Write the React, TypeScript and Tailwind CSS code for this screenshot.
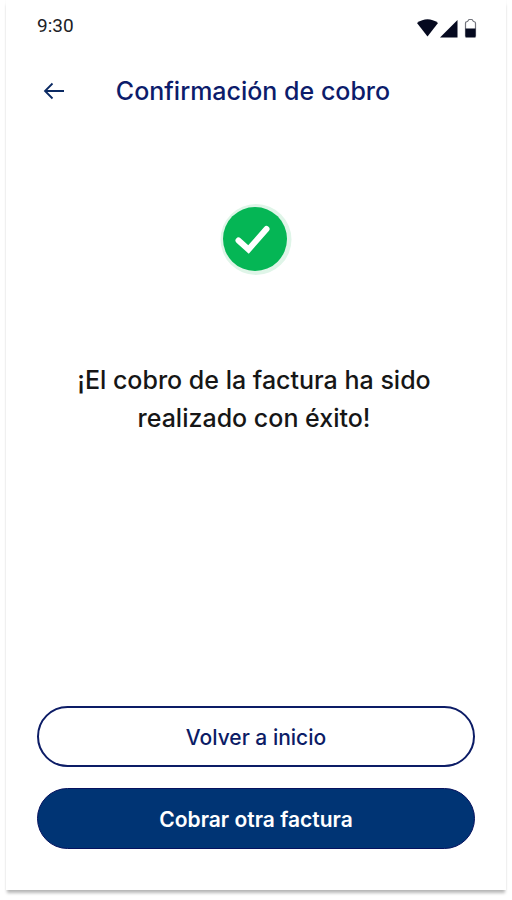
import React from "react";

function StatusIcons() {
  return (
    <svg className="h-6 w-15 overflow-visible" viewBox="0 0 60 24" aria-hidden="true">
      <path d="M2 9Q12.500 1.500 23 9L12.500 22.500Z" fill="#05091f" />
      <path d="M42.500 6V23.500H25Z" fill="#05091f" />
      <path
        d="M50.500 22V9.500Q50.500 7.500 52.500 7.500L54 5.500H57L58.500 7.500Q60.500 7.500 60.500 9.500V22Z"
        fill="#ffffff"
        stroke="#73757d"
        strokeWidth="1.200"
      />
      <path d="M50.500 14.500H60.500V23.500H50.500Z" fill="#05091f" />
    </svg>
  );
}

function StatusBar() {
  return (
    <div className="flex h-6 items-center justify-between text-[#202124]">
      <time className="font-[Roboto,sans-serif] text-[19px] leading-6">9:30</time>
      <StatusIcons />
    </div>
  );
}

function SuccessMark() {
  return (
    <svg
      className="mx-auto block h-18 w-18"
      viewBox="0 0 72 72"
      role="img"
      aria-label="Cobro exitoso"
    >
      <circle cx="36" cy="35.500" r="35.500" fill="#dff5e8" />
      <circle cx="35" cy="35" r="32" fill="#05b655" />
      <path
        d="M18.500 36.500L28.500 45.500L46.500 25"
        fill="none"
        stroke="#ffffff"
        strokeWidth="6"
        strokeLinecap="round"
        strokeLinejoin="miter"
      />
    </svg>
  );
}

export default function App() {
  return (
    <div className="flex min-h-screen flex-col bg-white px-1.5 pb-2.5 font-['Inter','Liberation_Sans',sans-serif]">
      <main className="flex grow flex-col bg-white px-[31px] pt-3.5 pb-[41px] shadow-[0_0_2px_rgba(0,0,0,0.04),0_4px_3px_-1px_rgba(0,0,0,0.28)]">
        <StatusBar />
        <header className="mt-8 grid grid-cols-[34px_1fr_40px] items-center">
          <button type="button" aria-label="Volver" className="flex h-10 items-center justify-center text-[#0b2a63]">
            <svg className="h-6 w-6" viewBox="0 0 24 24" fill="none" stroke="currentColor" strokeWidth="1.800" aria-hidden="true">
              <path d="M22 13H3M10.500 5.500L3 13L10.500 20.500" />
            </svg>
          </button>
          <h1 className="pt-0.5 text-center text-[25px] leading-[38px] font-medium text-[#0c1c6b]">
            Confirmación de cobro
          </h1>
        </header>
        <section className="mt-[94px] flex flex-col items-center gap-[85px] text-center">
          <SuccessMark />
          <p className="max-w-[384px] pr-1 text-[25px] leading-[38px] font-medium text-[#161616]">
            ¡El cobro de la factura ha sido realizado con éxito!
          </p>
        </section>
        <div className="mt-auto flex flex-col gap-[21px]">
          <button
            type="button"
            className="h-[61px] w-full rounded-full border-2 border-[#0c1c66] bg-white pt-0.5 text-[21px] font-medium text-[#0c1c66]"
          >
            Volver a inicio
          </button>
          <button
            type="button"
            className="h-[61px] w-full rounded-full border border-[#06125f] bg-[#003474] pt-0.5 text-[21px] font-semibold text-white"
          >
            Cobrar otra factura
          </button>
        </div>
      </main>
    </div>
  );
}
